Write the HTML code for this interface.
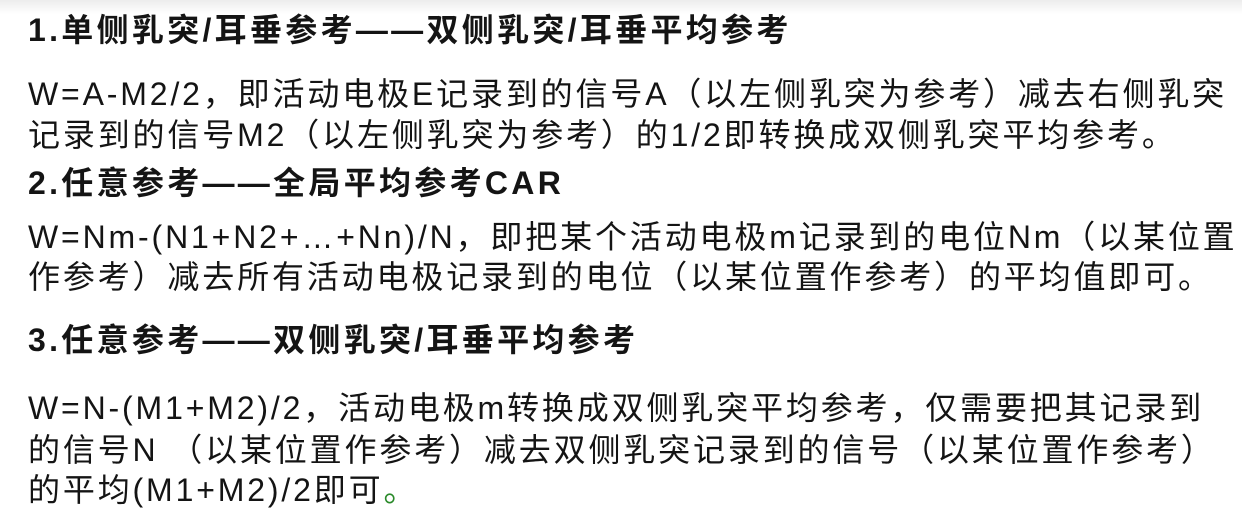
<!DOCTYPE html>
<html><head><meta charset="utf-8"><style>
html,body{margin:0;padding:0;}
body{width:1242px;height:520px;background:#fff;position:relative;overflow:hidden;
font-family:"Liberation Sans","Noto Sans CJK SC",sans-serif;color:#141414;}
.t{position:absolute;left:28px;white-space:nowrap;font-size:32px;letter-spacing:2.85px;line-height:40px;}
.b{font-weight:bold;letter-spacing:3.3px;}
.top{position:absolute;left:0;top:0;width:1242px;height:14px;background:linear-gradient(#ececec,#fff);}
</style></head><body>
<div class="top"></div>
<div class="t b" style="top:10px">1.单侧乳突/耳垂参考——双侧乳突/耳垂平均参考</div>
<div class="t" style="top:74px">W=A-M2/2，即活动电极E记录到的信号A（以左侧乳突为参考）减去右侧乳突</div>
<div class="t" style="top:115px">记录到的信号M2（以左侧乳突为参考）的1/2即转换成双侧乳突平均参考。</div>
<div class="t b" style="top:163px">2.任意参考——全局平均参考CAR</div>
<div class="t" style="top:217px">W=Nm-(N1+N2+…+Nn)/N，即把某个活动电极m记录到的电位Nm（以某位置</div>
<div class="t" style="top:257px">作参考）减去所有活动电极记录到的电位（以某位置作参考）的平均值即可。</div>
<div class="t b" style="top:320px">3.任意参考——双侧乳突/耳垂平均参考</div>
<div class="t" style="top:388px">W=N-(M1+M2)/2，活动电极m转换成双侧乳突平均参考，仅需要把其记录到</div>
<div class="t" style="top:430px">的信号N （以某位置作参考）减去双侧乳突记录到的信号（以某位置作参考）</div>
<div class="t" style="top:470px">的平均(M1+M2)/2即可<span style="color:#2a8a2a">。</span></div>
</body></html>
